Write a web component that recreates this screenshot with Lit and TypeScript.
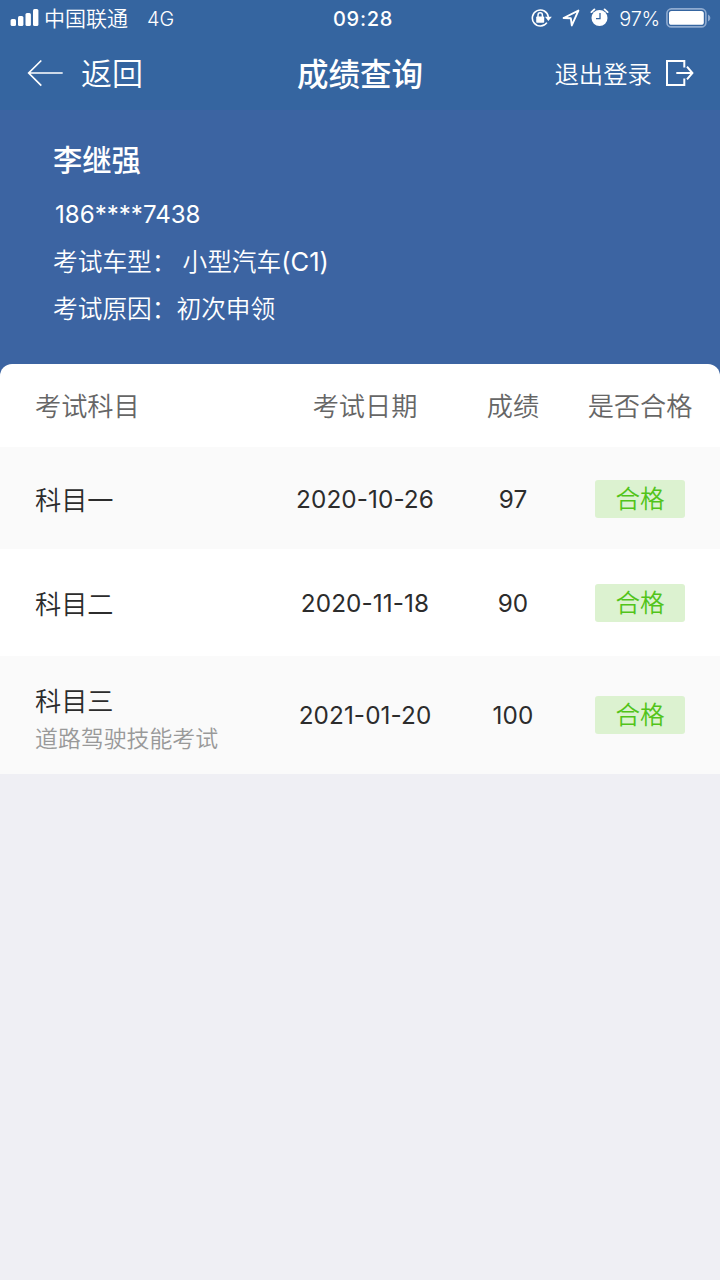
import { LitElement, html, css } from "lit";
import { customElement } from "lit/decorators.js";

interface Exam {
  subject: string;
  note?: string;
  date: string;
  score: number;
  result: string;
  size: string;
}

const EXAMS: Exam[] = [
  { subject: "科目一", date: "2020-10-26", score: 97, result: "合格", size: "first" },
  { subject: "科目二", date: "2020-11-18", score: 90, result: "合格", size: "second" },
  { subject: "科目三", note: "道路驾驶技能考试", date: "2021-01-20", score: 100, result: "合格", size: "third" },
];

@customElement("status-bar")
class StatusBar extends LitElement {
  static styles = css`
    :host { display: flex; height: 37px; align-items: center; color: #fff; white-space: nowrap; }
    .side { flex: 1; display: flex; align-items: center; height: 37px; }
    .left { padding-left: 10px; }
    .right { justify-content: flex-end; padding-right: 9px; }
    .carrier { font-size: 21px; margin-left: 5px; line-height: 36px; }
    .net { font-size: 19.8px; margin-left: 19px; line-height: 38px; height: 37px; }
    .time { font-size: 20px; font-weight: 500; letter-spacing: 0.75px; width: 62px; text-align: center; margin-left: 5px; line-height: 38px; height: 37px; }
    .pct { font-size: 19.9px; letter-spacing: -0.2px; line-height: 38px; height: 37px; }
    .lock, .arrow, .alarm { margin-right: 10px; margin-bottom: 2px; }
    .battery { margin-left: 6px; margin-bottom: 2px; }
    svg { display: block; flex: none; }
    .bars { margin-bottom: 1px; }
  `;
  render() {
    return html`
      <div class="side left">
        <svg class="bars" width="29" height="18" viewBox="0 0 29 18" fill="#fff">
          <rect x="0.6" y="10" width="5.4" height="7" rx="1.5" />
          <rect x="8" y="7" width="5.4" height="10" rx="1.5" />
          <rect x="15.5" y="4" width="5.4" height="13" rx="1.5" />
          <rect x="23" y="0" width="5.4" height="17" rx="1.5" />
        </svg>
        <span class="carrier">中国联通</span>
        <span class="net">4G</span>
      </div>
      <span class="time">09:28</span>
      <div class="side right">
        <svg class="lock" width="21" height="20" viewBox="0 0 21 20">
          <path d="M15.9 14.6A8 8 0 1 1 17.3 9" fill="none" stroke="#fff" stroke-width="1.6" />
          <path d="M14 8.8h6.8l-3.4 4.3z" fill="#fff" />
          <rect x="5.2" y="8.4" width="8" height="6.4" rx="0.8" fill="#fff" />
          <path d="M7 9V7a2.2 2.2 0 0 1 4.4 0v2" fill="none" stroke="#fff" stroke-width="1.5" />
        </svg>
        <svg class="arrow" width="18" height="18" viewBox="0 0 18 18">
          <path d="M1.6 9L16.4 1.6L9.8 16.4L8.8 9.2Z" fill="none" stroke="#fff" stroke-width="1.9" stroke-linejoin="round" />
        </svg>
        <svg class="alarm" width="19" height="19" viewBox="0 0 19 19">
          <circle cx="9.5" cy="10" r="8" fill="#fff" />
          <path d="M1.4 4.1L4.4 1.4M17.6 4.1L14.6 1.4" fill="none" stroke="#fff" stroke-width="1.9" stroke-linecap="round" />
          <path d="M10 5V10.6H6" fill="none" stroke="#3565a0" stroke-width="1.3" />
        </svg>
        <span class="pct">97%</span>
        <svg class="battery" width="45" height="20" viewBox="0 0 45 20">
          <rect x="0.9" y="0.9" width="39" height="18" rx="4.5" fill="none" stroke="#8fabd0" stroke-width="1.6" />
          <rect x="3" y="3" width="34.8" height="13.8" rx="2.6" fill="#fff" />
          <path d="M42 6.5Q44.4 7.6 44.4 10T42 13.5z" fill="#8fabd0" />
        </svg>
      </div>
    `;
  }
}

@customElement("nav-bar")
class NavBar extends LitElement {
  static styles = css`
    :host { display: flex; height: 73px; align-items: center; color: #fff; white-space: nowrap; }
    .side { flex: 1; display: flex; align-items: center; height: 73px; }
    .left { padding-left: 27px; }
    .right { justify-content: flex-end; padding-right: 26px; }
    .back { font-size: 31px; margin-left: 18px; padding-bottom: 4px; }
    .title { font-size: 31.5px; font-weight: 500; padding-bottom: 4px; margin-right: 1px; }
    .logout { font-size: 24.4px; margin-right: 13px; padding-bottom: 3px; }
    svg { display: block; flex: none; margin-bottom: 2px; }
  `;
  render() {
    return html`
      <div class="side left">
        <svg width="36" height="28" viewBox="0 0 36 28" fill="none" stroke="#fff" stroke-width="1.7">
          <path d="M14.3 1.5L1.7 14L14.3 26.6M1.7 14H35.7" />
        </svg>
        <span class="back">返回</span>
      </div>
      <span class="title">成绩查询</span>
      <div class="side right">
        <span class="logout">退出登录</span>
        <svg width="29" height="28" viewBox="0 0 29 28" fill="none" stroke="#fff" stroke-width="2">
          <path d="M19.3 8.5V2H2V26H19.3V19.5M11.3 14H27M22 7.6L27.4 14L22 20.4" />
        </svg>
      </div>
    `;
  }
}

@customElement("exam-profile")
class ExamProfile extends LitElement {
  static styles = css`
    :host { display: block; height: 254px; padding: 27px 53px 0; box-sizing: border-box; background: #3c64a2; color: #fff; white-space: nowrap; }
    .name { font-size: 29.3px; font-weight: 500; line-height: 47px; height: 46px; }
    .phone { font-size: 24.1px; line-height: 46px; height: 46px; margin-top: 9px; padding-left: 2px; font-weight: 380; }
    .line { font-size: 24.7px; line-height: 48px; height: 47px; display: flex; }
    .gap { margin-left: 6px; }
    .latin { font-size: 25.5px; font-weight: 380; }
  `;
  render() {
    return html`
      <div class="name">李继强</div>
      <div class="phone">186****7438</div>
      <div class="line"><span>考试车型：</span><span class="gap">小型汽车<span class="latin">(C1)</span></span></div>
      <div class="line"><span>考试原因：</span><span>初次申领</span></div>
    `;
  }
}

@customElement("score-table")
class ScoreTable extends LitElement {
  static styles = css`
    :host { display: block; background: #3c64a2; }
    .card { border-radius: 12px 12px 0 0; overflow: hidden; background: #fff; }
    .row { display: grid; grid-template-columns: 244px 172px 124px 130px; padding-left: 35px; align-items: center; justify-items: center; color: #2c2c2c; font-size: 26.2px; white-space: nowrap; box-sizing: border-box; }
    .head { height: 83px; color: #666; padding-bottom: 2px; }
    .first { height: 102px; background: #fafafa; padding-top: 2px; }
    .second { height: 107px; padding-top: 1px; }
    .third { height: 118px; background: #fafafa; }
    .subject { justify-self: start; padding-top: 3px; }
    .head .subject { padding-top: 0; }
    .third .subject { padding-top: 9px; }
    .name { line-height: 38px; }
    .note { font-size: 22.9px; line-height: 36px; color: #999; }
    .num { font-size: 24.3px; letter-spacing: 0.1px; font-weight: 390; }
    .badge { width: 90px; height: 38px; line-height: 39px; border-radius: 3px; background: #dcf2d0; color: #52c41a; font-size: 24.6px; text-align: center; }
  `;
  render() {
    return html`
      <div class="card">
        <div class="row head">
          <span class="subject">考试科目</span><span>考试日期</span><span>成绩</span><span>是否合格</span>
        </div>
        ${EXAMS.map(
          (e) => html`
            <div class="row ${e.size}">
              <div class="subject">
                <div class="name">${e.subject}</div>
                ${e.note ? html`<div class="note">${e.note}</div>` : ""}
              </div>
              <span class="num">${e.date}</span>
              <span class="num">${e.score}</span>
              <span class="badge">${e.result}</span>
            </div>
          `
        )}
      </div>
    `;
  }
}

@customElement("app-root")
class AppRoot extends LitElement {
  static styles = css`
    :host { display: block; width: 720px; height: 1280px; overflow: hidden; background: #efeff4; font-family: Inter, "Noto Sans CJK SC", sans-serif; font-weight: 350; }
    .top { background: #3565a0; }
  `;
  render() {
    return html`
      <div class="top"><status-bar></status-bar><nav-bar></nav-bar></div>
      <exam-profile></exam-profile>
      <score-table></score-table>
    `;
  }
}
